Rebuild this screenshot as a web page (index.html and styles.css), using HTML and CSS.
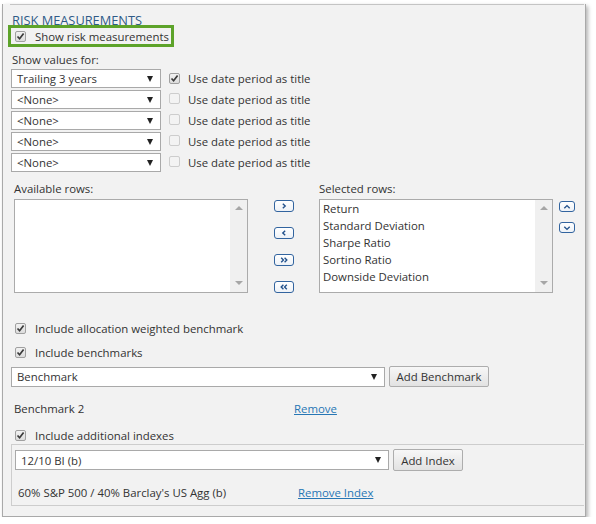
FILE: index.html
```html
<!DOCTYPE html>
<html lang="en">
<head>
  <meta charset="UTF-8">
  <title>Risk Measurements</title>
  <link rel="stylesheet" href="styles.css">
</head>
<body>
  <div class="panel">
    <div class="top-rule"></div>
    <h2 class="title">RISK MEASUREMENTS</h2>

    <!-- Main toggle -->
    <div class="highlight">
      <label class="check"><span class="box checked"><svg viewBox="0 0 9 9"><path d="M1.5 4.5 L3.6 6.8 L7.6 1.6"/></svg></span>Show risk measurements</label>
    </div>

    <div class="label">Show values for:</div>
    <div class="periods">
      <div class="period-row">
        <div class="select period"><span>Trailing 3 years</span><i class="caret"></i></div>
        <label class="check"><span class="box checked"><svg viewBox="0 0 9 9"><path d="M1.5 4.5 L3.6 6.8 L7.6 1.6"/></svg></span>Use date period as title</label>
      </div>
      <div class="period-row">
        <div class="select period"><span>&lt;None&gt;</span><i class="caret"></i></div>
        <label class="check"><span class="box disabled"></span>Use date period as title</label>
      </div>
      <div class="period-row">
        <div class="select period"><span>&lt;None&gt;</span><i class="caret"></i></div>
        <label class="check"><span class="box disabled"></span>Use date period as title</label>
      </div>
      <div class="period-row">
        <div class="select period"><span>&lt;None&gt;</span><i class="caret"></i></div>
        <label class="check"><span class="box disabled"></span>Use date period as title</label>
      </div>
      <div class="period-row">
        <div class="select period"><span>&lt;None&gt;</span><i class="caret"></i></div>
        <label class="check"><span class="box disabled"></span>Use date period as title</label>
      </div>
    </div>

    <!-- Row pickers -->
    <div class="rows">
      <div class="rows-col available">
        <div class="list-label">Available rows:</div>
        <div class="listbox">
          <div class="items"></div>
          <div class="scroll"><i class="arrow-up"></i><i class="arrow-down"></i></div>
        </div>
      </div>
      <div class="move-btns">
        <button class="icon-btn"><svg viewBox="0 0 8 6"><path d="M2.8 0.8 L5.2 3 L2.8 5.2"/></svg></button>
        <button class="icon-btn"><svg viewBox="0 0 8 6"><path d="M5.2 0.8 L2.8 3 L5.2 5.2"/></svg></button>
        <button class="icon-btn"><svg viewBox="0 0 8 6"><path d="M1.2 0.8 L3.4 3 L1.2 5.2 M4.6 0.8 L6.8 3 L4.6 5.2"/></svg></button>
        <button class="icon-btn"><svg viewBox="0 0 8 6"><path d="M3.4 0.8 L1.2 3 L3.4 5.2 M6.8 0.8 L4.6 3 L6.8 5.2"/></svg></button>
      </div>
      <div class="rows-col">
        <div class="list-label">Selected rows:</div>
        <div class="listbox">
          <div class="items">
            <div>Return</div>
            <div>Standard Deviation</div>
            <div>Sharpe Ratio</div>
            <div>Sortino Ratio</div>
            <div>Downside Deviation</div>
          </div>
          <div class="scroll"><i class="arrow-up"></i><i class="arrow-down"></i></div>
        </div>
      </div>
      <div class="order-btns">
        <button class="icon-btn small"><svg viewBox="0 0 8 6"><path d="M1.3 4.2 L4 1.6 L6.7 4.2"/></svg></button>
        <button class="icon-btn small"><svg viewBox="0 0 8 6"><path d="M1.3 1.8 L4 4.4 L6.7 1.8"/></svg></button>
      </div>
    </div>

    <!-- Benchmarks -->
    <label class="check row-check first"><span class="box checked"><svg viewBox="0 0 9 9"><path d="M1.5 4.5 L3.6 6.8 L7.6 1.6"/></svg></span>Include allocation weighted benchmark</label>
    <label class="check row-check"><span class="box checked"><svg viewBox="0 0 9 9"><path d="M1.5 4.5 L3.6 6.8 L7.6 1.6"/></svg></span>Include benchmarks</label>

    <div class="add-row">
      <div class="select wide"><span>Benchmark</span><i class="caret"></i></div>
      <button class="btn bench-btn">Add Benchmark</button>
    </div>

    <div class="item-row bench-item">
      <span class="item-name">Benchmark 2</span>
      <a href="#" class="link">Remove</a>
    </div>

    <label class="check row-check indexes"><span class="box checked"><svg viewBox="0 0 9 9"><path d="M1.5 4.5 L3.6 6.8 L7.6 1.6"/></svg></span>Include additional indexes</label>

    <div class="index-box">
      <div class="add-row">
        <div class="select wide"><span>12/10 BI (b)</span><i class="caret"></i></div>
        <button class="btn index-btn">Add Index</button>
      </div>
      <div class="item-row index-item">
        <span class="item-name">60% S&amp;P 500 / 40% Barclay's US Agg (b)</span>
        <a href="#" class="link">Remove Index</a>
      </div>
    </div>
  </div>
</body>
</html>
```

FILE: styles.css
```css
body {
  margin: 0;
  font-family: "Open Sans", "Noto Sans", sans-serif;
  font-size: 11.4px;
  color: #333;
  background: #fff;
}

.panel {
  box-sizing: border-box;
  margin-left: 2px;
  width: 584px;
  height: 513px;
  padding: 0 1px 0 8px;
  background: #f2f2f2;
  border: 1px solid #a9a9a9;
  border-top: none;
  box-shadow: 2px 2px 4px rgba(0, 0, 0, 0.3);
}

.top-rule {
  margin: 4px 0 0 -1px;
  border-top: 1px solid #c4c4c4;
}

.title {
  margin: 9px 0 0 1px;
  font-size: 12.8px;
  line-height: 13px;
  font-weight: normal;
  color: #2f5b88;
}

.highlight {
  box-sizing: border-box;
  display: flex;
  align-items: center;
  width: 166px;
  height: 22px;
  margin: -2px 0 0 -3px;
  padding: 2px 0 0 4px;
  border: 3px solid #5da32a;
}

.check {
  display: flex;
  align-items: baseline;
  gap: 9px;
  line-height: 16px;
  white-space: nowrap;
}

.box {
  box-sizing: border-box;
  display: flex;
  align-items: center;
  justify-content: center;
  width: 11px;
  height: 11px;
  border: 1px solid #a0a0a0;
  border-radius: 2px;
  background: linear-gradient(#f2f2f2, #dcdcdc);
}

.box svg {
  width: 9px;
  height: 9px;
  fill: none;
  stroke: #3a3a3a;
  stroke-width: 1.7;
}

.box.disabled {
  border-color: #cdcdcd;
  background: #f3f3f3;
}

.label {
  margin-top: 6px;
  padding-left: 1px;
  line-height: 14px;
}

.periods {
  display: flex;
  flex-direction: column;
  gap: 2px;
  margin-top: 2px;
}

.period-row {
  display: flex;
  align-items: center;
}

.period-row .check {
  margin-left: 8px;
  gap: 8px;
}

.select {
  box-sizing: border-box;
  display: flex;
  align-items: center;
  justify-content: space-between;
  height: 20px;
  padding: 0 7px 0 5px;
  background: #fff;
  border: 1px solid #a9a9a9;
  white-space: nowrap;
}

.select.period {
  width: 150px;
  height: 19px;
}

.select.wide {
  width: 374px;
}

.caret {
  width: 0;
  height: 0;
  border-left: 3px solid transparent;
  border-right: 3px solid transparent;
  border-top: 6px solid #222;
}

.rows {
  display: flex;
  margin-top: 10px;
}

.rows-col {
  width: 234px;
  margin-left: 25px;
}

.rows-col.available {
  margin-left: 3px;
}

.list-label {
  line-height: 14px;
  margin-bottom: 3px;
}

.listbox {
  box-sizing: border-box;
  display: flex;
  height: 94px;
  background: #fff;
  border: 1px solid #ababab;
}

.items {
  flex: 1;
  padding: 0 3px;
  line-height: 17px;
}

.scroll {
  display: flex;
  flex-direction: column;
  justify-content: space-between;
  align-items: center;
  width: 17px;
  padding: 6px 0 7px;
  background: #f0f0f0;
}

.arrow-up,
.arrow-down {
  width: 0;
  height: 0;
  border-left: 4px solid transparent;
  border-right: 4px solid transparent;
}

.arrow-up {
  border-bottom: 4px solid #a6a6a6;
}

.arrow-down {
  border-top: 4px solid #a6a6a6;
}

.move-btns {
  display: flex;
  flex-direction: column;
  gap: 15px;
  margin-left: 26px;
  padding-top: 18px;
}

.order-btns {
  display: flex;
  flex-direction: column;
  gap: 10px;
  margin-left: 6px;
  padding-top: 19px;
}

.icon-btn {
  box-sizing: border-box;
  display: flex;
  align-items: center;
  justify-content: center;
  width: 20px;
  height: 12px;
  padding: 0;
  background: linear-gradient(#ffffff, #eef2f7);
  border: 1.5px solid #32649f;
  border-radius: 3px;
}

.icon-btn.small {
  width: 16px;
  height: 11px;
}

.icon-btn svg {
  width: 8px;
  height: 6px;
  fill: none;
  stroke: #23528c;
  stroke-width: 1.4;
}

.row-check {
  padding-left: 4px;
  margin-top: 8px;
}

.row-check.first {
  margin-top: 28px;
}

.row-check.indexes {
  margin-top: 12px;
  line-height: 14px;
}

.add-row {
  display: flex;
  align-items: center;
  gap: 4px;
  margin-top: 5px;
}

.btn {
  box-sizing: border-box;
  height: 21px;
  padding: 0;
  font: inherit;
  color: #333;
  white-space: nowrap;
  background: linear-gradient(#f7f7f7, #e2e2e2);
  border: 1px solid #adadad;
  border-radius: 2px;
}

.bench-btn {
  width: 100px;
}

.index-btn {
  width: 70px;
}

.item-row {
  display: flex;
  line-height: 16px;
  padding-left: 3px;
}

.bench-item {
  margin-top: 14px;
}

.item-name {
  width: 280px;
}

.link {
  color: #2777b5;
  text-decoration: underline;
}

.index-box {
  margin-top: 1px;
  padding: 0 0 4px 3px;
  border: 1px solid #cdcdcd;
  border-right: none;
}

.index-box .add-row {
  margin-top: 4px;
}

.index-box .btn {
  height: 22px;
}

.index-item {
  margin-top: 14px;
}
```
